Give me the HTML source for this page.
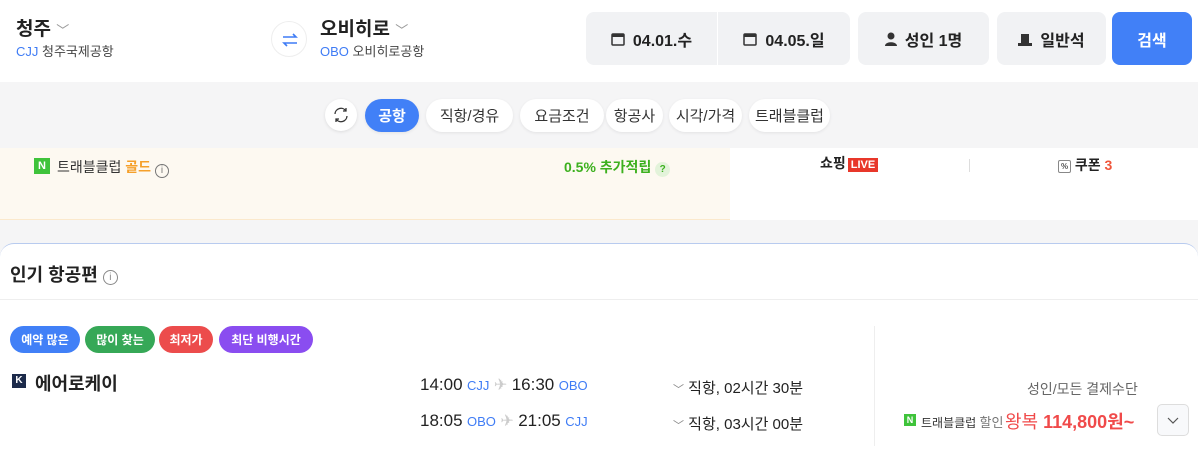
<!DOCTYPE html>
<html><head><meta charset="utf-8"><style>
*{margin:0;padding:0;box-sizing:border-box}
body{width:1198px;height:458px;overflow:hidden;background:#f5f5f6;font-family:"Liberation Sans","Noto Sans CJK KR",sans-serif;color:#222;position:relative}
.a{position:absolute}
.hdr{left:0;top:0;width:1198px;height:82px;background:#fff}
.city{font-size:19px;font-weight:bold;color:#222}
.sub{font-size:13px;color:#444}
.sub b{font-weight:normal;color:#3f7cf5}
.box{top:12px;height:53px;background:#f1f2f4;border-radius:8px;font-size:16px;font-weight:bold;display:flex;align-items:center;justify-content:center;gap:8px}
.pill{top:99px;height:33px;border-radius:17px;background:#fff;font-size:15px;color:#333;display:flex;align-items:center;justify-content:center;box-shadow:0 1px 3px rgba(0,0,0,.08)}
.tag{top:326px;height:27px;border-radius:14px;color:#fff;font-size:12px;font-weight:bold;display:flex;align-items:center;justify-content:center}
.t{font-size:17px;color:#222}
.c{font-size:13px;color:#3f7cf5}
.dur{font-size:15px;color:#222}
</style></head><body>
<div class="a hdr"></div>
<div class="a city" style="left:16px;top:14px">청주 <span style="font-weight:normal;color:#999;font-size:13px">﹀</span></div>
<div class="a sub" style="left:16px;top:41px"><b>CJJ</b> 청주국제공항</div>
<div class="a" style="left:271px;top:21px;width:36px;height:36px;border-radius:50%;border:1px solid #eee;background:#fff"><svg width="36" height="36" viewBox="0 0 36 36"><path d="M11 15h13l-3-3M25 21H12l3 3" fill="none" stroke="#3f7cf5" stroke-width="1.6"/></svg></div>
<div class="a city" style="left:320px;top:14px;font-weight:bold">오비히로 <span style="font-weight:normal;color:#999;font-size:13px">﹀</span></div>
<div class="a sub" style="left:320px;top:41px"><b>OBO</b> 오비히로공항</div>
<div class="a box" style="left:586px;width:264px;"></div>
<div class="a" style="left:717px;top:12px;width:1px;height:53px;background:#fff"></div>
<div class="a box" style="left:586px;width:131px;background:none"><svg width="14" height="14"><rect x="1" y="2" width="12" height="11" rx="1" fill="none" stroke="#333" stroke-width="1.5"/><rect x="1" y="2" width="12" height="3" fill="#333"/></svg>04.01.수</div>
<div class="a box" style="left:718px;width:132px;background:none"><svg width="14" height="14"><rect x="1" y="2" width="12" height="11" rx="1" fill="none" stroke="#333" stroke-width="1.5"/><rect x="1" y="2" width="12" height="3" fill="#333"/></svg>04.05.일</div>
<div class="a box" style="left:858px;width:131px"><svg width="12" height="14"><circle cx="6" cy="4" r="3.5" fill="#333"/><path d="M0 14c0-5 12-5 12 0z" fill="#333"/></svg>성인 1명</div>
<div class="a box" style="left:997px;width:109px"><svg width="14" height="14"><path d="M3 2h8v9H3z M0 11h14v3H0z" fill="#333"/></svg>일반석</div>
<div class="a box" style="left:1112px;width:80px;background:#4180f7;color:#fff;font-size:16px">검색</div>
<div class="a" style="left:325px;top:99px;width:32px;height:32px;border-radius:50%;background:#fff;box-shadow:0 1px 3px rgba(0,0,0,.1)"><svg width="32" height="32"><path d="M10 15a6 6 0 0 1 11-3M22 17a6 6 0 0 1-11 3M21 9v3h-3M11 23v-3h3" fill="none" stroke="#333" stroke-width="1.3"/></svg></div>
<div class="a pill" style="left:365px;width:54px;background:#4180f7;color:#fff;font-weight:bold">공항</div>
<div class="a pill" style="left:426px;width:87px">직항/경유</div>
<div class="a pill" style="left:520px;width:84px">요금조건</div>
<div class="a pill" style="left:606px;width:57px">항공사</div>
<div class="a pill" style="left:669px;width:73px">시각/가격</div>
<div class="a pill" style="left:749px;width:81px">트래블클럽</div>
<div class="a" style="left:0;top:148px;width:730px;height:72px;background:#fdf9f1;border-bottom:1px solid #fbe9cc"></div>
<div class="a" style="left:730px;top:148px;width:468px;height:72px;background:#fff"></div>
<div class="a" style="left:34px;top:158px;width:16px;height:16px;background:#3fc33b;color:#fff;font-size:11px;font-weight:bold;text-align:center;line-height:16px">N</div>
<div class="a" style="left:57px;top:157px;font-size:14px;color:#333">트래블클럽 <b style="color:#f5a02a">골드</b> <span style="display:inline-block;width:14px;height:14px;border:1px solid #777;border-radius:50%;font-size:10px;line-height:12px;text-align:center;color:#777;vertical-align:-1px">i</span></div>
<div class="a" style="left:564px;top:157px;font-size:14px;font-weight:bold;color:#3cb01e">0.5% 추가적립 <span style="display:inline-block;width:15px;height:15px;border-radius:50%;background:#e3f3da;font-size:10px;text-align:center;line-height:15px">?</span></div>
<div class="a" style="left:820px;top:153px;font-size:14px;font-weight:bold">쇼핑<span style="background:#e8372a;color:#fff;font-size:11px;padding:1px 3px;margin-left:2px">LIVE</span></div>
<div class="a" style="left:969px;top:159px;width:1px;height:13px;background:#ddd"></div>
<div class="a" style="left:1058px;top:155px;font-size:14px;font-weight:bold"><span style="display:inline-block;width:13px;height:13px;border:1px solid #888;border-radius:2px;font-size:8px;text-align:center;line-height:11px;color:#555;vertical-align:1px">%</span> 쿠폰 <span style="color:#f0553a">3</span></div>
<div class="a" style="left:0;top:243px;width:1198px;height:220px;background:#fff;border-top:1px solid #b8cbef;border-radius:14px 14px 0 0"></div>
<div class="a" style="left:10px;top:261px;font-size:18px;font-weight:bold">인기 항공편 <span style="display:inline-block;width:15px;height:15px;border:1px solid #888;border-radius:50%;font-size:10px;line-height:13px;text-align:center;color:#888;font-weight:normal;vertical-align:1px">i</span></div>
<div class="a" style="left:0;top:299px;width:1198px;height:1px;background:#eee"></div>
<div class="a tag" style="left:10px;width:70px;background:#4180f7">예약 많은</div>
<div class="a tag" style="left:85px;width:70px;background:#36a857">많이 찾는</div>
<div class="a tag" style="left:159px;width:54px;background:#ec4c4c">최저가</div>
<div class="a tag" style="left:219px;width:94px;background:#8a4df0">최단 비행시간</div>
<div class="a" style="left:12px;top:374px;width:14px;height:14px;background:#1c2a4a;color:#fff;font-size:10px;font-weight:bold;text-align:center;line-height:14px">K</div>
<div class="a" style="left:35px;top:370px;font-size:18px;font-weight:bold">에어로케이</div>
<div class="a" style="left:420px;top:375px"><span class="t">14:00</span> <span class="c">CJJ</span> <span style="color:#ccc">✈</span> <span class="t">16:30</span> <span class="c">OBO</span></div>
<div class="a" style="left:420px;top:411px"><span class="t">18:05</span> <span class="c">OBO</span> <span style="color:#ccc">✈</span> <span class="t">21:05</span> <span class="c">CJJ</span></div>
<div class="a dur" style="left:673px;top:377px"><span style="color:#888;font-size:11px">﹀</span> 직항, 02시간 30분</div>
<div class="a dur" style="left:673px;top:413px"><span style="color:#888;font-size:11px">﹀</span> 직항, 03시간 00분</div>
<div class="a" style="left:874px;top:326px;width:1px;height:120px;background:#eee"></div>
<div class="a" style="left:1027px;top:379px;font-size:14px;color:#666">성인/모든 결제수단</div>
<div class="a" style="left:904px;top:414px;width:12px;height:12px;background:#3fc33b;color:#fff;font-size:9px;font-weight:bold;text-align:center;line-height:12px">N</div>
<div class="a" style="left:921px;top:412px;font-size:12px;color:#333">트래블클럽 <span style="font-size:13px;color:#777">할인</span></div>
<div class="a" style="left:1005px;top:408px;font-size:18px;color:#f04a4a">왕복 <b>114,800원~</b></div>
<div class="a" style="left:1157px;top:404px;width:32px;height:32px;border:1px solid #ddd;border-radius:5px;background:#f8f9fb"><svg width="30" height="30"><path d="M10 13l5 5 5-5" fill="none" stroke="#555" stroke-width="1.2"/></svg></div>
</body></html>
